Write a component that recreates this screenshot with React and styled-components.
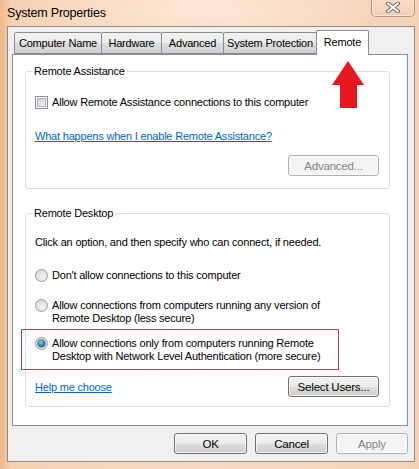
import styled, { createGlobalStyle } from "styled-components";

const GlobalStyle = createGlobalStyle`
  html, body {
    margin: 0;
    padding: 0;
  }
  body {
    font-family: "Liberation Sans", Arial, sans-serif;
    font-size: 11px;
    letter-spacing: -0.2px;
    color: #000;
  }
`;

const Window = styled.div`
  position: relative;
  width: 419px;
  height: 469px;
  display: flex;
  flex-direction: column;
  overflow: hidden;
  background:
    radial-gradient(ellipse 180px 40px at 200px 10px, rgba(255, 236, 220, 0.8), transparent),
    linear-gradient(90deg, #f0b88c 0px, #f6d2b3 12px, #f7d9bf 50%, #f6d3b5 100%);
`;

const TitleBar = styled.div`
  height: 27px;
  display: flex;
  align-items: flex-start;
  justify-content: space-between;
  padding: 0 4px 0 7px;
`;

const Title = styled.div`
  margin-top: 6px;
  font-size: 12.5px;
  color: #000;
`;

const CloseBtn = styled.div`
  width: 42px;
  height: 17px;
  margin-top: -1px;
  border: 1px solid rgba(120, 90, 70, 0.5);
  border-top: none;
  border-radius: 0 0 5px 5px;
  background: linear-gradient(#f9dcc4, #f4d0b2);
  box-shadow: inset 0 0 0 1px rgba(255, 255, 255, 0.5);
  display: flex;
  align-items: center;
  justify-content: center;
`;

const Client = styled.div`
  flex: 1;
  margin: 0 4px 7px 7px;
  background: #f0f0f0;
  border: 1px solid #8d8d8d;
  display: flex;
  flex-direction: column;
  padding: 3px 6px 7px 4px;
`;

const TabRow = styled.div`
  display: flex;
  align-items: flex-end;
  height: 24px;
  padding-left: 2px;
  position: relative;
  z-index: 1;
`;

const Tab = styled.div`
  width: ${(p) => p.$w}px;
  height: ${(p) => (p.$active ? 25 : 22)}px;
  margin-left: -1px;
  margin-bottom: ${(p) => (p.$active ? -1 : 0)}px;
  box-sizing: border-box;
  border: 1px solid #898c95;
  border-bottom: ${(p) => (p.$active ? "none" : "1px solid #898c95")};
  border-radius: 2px 2px 0 0;
  background: ${(p) =>
    p.$active
      ? "#fff"
      : "linear-gradient(#f2f2f2 0%, #ebebeb 50%, #dddddd 51%, #cfcfcf 100%)"};
  display: flex;
  align-items: ${(p) => (p.$active ? "flex-start" : "center")};
  justify-content: center;
  padding-top: ${(p) => (p.$active ? 5 : 0)}px;
  white-space: nowrap;
  &:first-child {
    margin-left: 0;
  }
`;

const Panel = styled.div`
  height: 372px;
  box-sizing: border-box;
  background: #fff;
  border: 1px solid #898c95;
  padding: 9px 17px 0 12px;
`;

const Group = styled.fieldset`
  margin: ${(p) => p.$top}px 0 0 0;
  padding: 0 10px ${(p) => p.$bottom}px 9px;
  border: 1px solid #d5dfe5;
  border-radius: 3px;
  min-width: 0;
`;

const Legend = styled.legend`
  padding: 0 2px;
  margin-left: -3px;
  line-height: 14px;
`;

const Line = styled.div`
  margin-top: ${(p) => p.$top}px;
  line-height: 14px;
  display: flex;
  align-items: ${(p) => (p.$center ? "center" : "flex-start")};
  justify-content: ${(p) => p.$justify || "flex-start"};
`;

const Label = styled.div`
  margin-left: 4px;
  line-height: 13px;
`;

const Check = styled.span`
  width: 13px;
  height: 13px;
  box-sizing: border-box;
  border: 1px solid #8e8f8f;
  background: #fff;
  display: flex;
  align-items: center;
  justify-content: center;
  flex-shrink: 0;
  &::after {
    content: "";
    width: 9px;
    height: 9px;
    background: linear-gradient(135deg, #cbcfd5, #f6f6f6);
    border: 1px solid #aeb3b9;
    box-sizing: border-box;
  }
`;

const Radio = styled.span`
  width: 13px;
  height: 13px;
  box-sizing: border-box;
  border-radius: 50%;
  border: 1px solid #9a9a9a;
  background: radial-gradient(circle at 60% 65%, #f4f4f4, #d2d2d2);
  display: flex;
  align-items: center;
  justify-content: center;
  flex-shrink: 0;
  &::after {
    content: "";
    display: ${(p) => (p.$on ? "block" : "none")};
    width: 7px;
    height: 7px;
    border-radius: 50%;
    background: radial-gradient(circle at 40% 35%, #8fd3f5, #1f6d9e 60%, #174f74);
    box-shadow: 0 0 0 0.5px #1d4a6a;
  }
`;

const Link = styled.a`
  color: #0066cc;
  text-decoration: underline;
  cursor: pointer;
`;

const Highlight = styled.div`
  width: 318px;
  box-sizing: border-box;
  margin: 4px 0 0 -14px;
  padding: 7px 0 6px 13px;
  border: 1px solid #c0404a;
  display: flex;
  align-items: flex-start;
`;

const Button = styled.button`
  width: ${(p) => p.$w || 91}px;
  height: 21px;
  box-sizing: border-box;
  font-family: inherit;
  font-size: 11.5px;
  letter-spacing: -0.2px;
  border-radius: 3px;
  border: 1px solid ${(p) => (p.disabled ? "#adb2b5" : "#707070")};
  color: ${(p) => (p.disabled ? "#838383" : "#000")};
  background: ${(p) =>
    p.disabled
      ? "#f4f4f4"
      : "linear-gradient(#f2f2f2 0%, #ebebeb 50%, #dddddd 51%, #cfcfcf 100%)"};
  box-shadow: inset 0 0 0 1px rgba(255, 255, 255, 0.7);
  padding: 0;
`;

const Footer = styled.div`
  margin-top: 7px;
  display: flex;
  justify-content: flex-end;
  gap: 8px;
`;

const Arrow = styled.svg`
  position: absolute;
  left: 331px;
  top: 60px;
`;

export default function App() {
  return (
    <>
      <GlobalStyle />
      <Window>
        <TitleBar>
          <Title>System Properties</Title>
          <CloseBtn>
            <svg width="14" height="11" viewBox="0 0 14 11">
              <path d="M2 1.5 L12 9.5 M12 1.5 L2 9.5" stroke="#6d6d6d" strokeWidth="4" strokeLinecap="round" />
              <path d="M2 1.5 L12 9.5 M12 1.5 L2 9.5" stroke="#fff" strokeWidth="2" strokeLinecap="round" />
            </svg>
          </CloseBtn>
        </TitleBar>
        <Client>
          <TabRow>
            <Tab $w={88}>Computer Name</Tab>
            <Tab $w={61}>Hardware</Tab>
            <Tab $w={63}>Advanced</Tab>
            <Tab $w={94}>System Protection</Tab>
            <Tab $w={53} $active>Remote</Tab>
          </TabRow>
          <Panel>
            <Group $top={0} $bottom={12}>
              <Legend>Remote Assistance</Legend>
              <Line $top={18} $center>
                <Check />
                <Label>Allow Remote Assistance connections to this computer</Label>
              </Line>
              <Line $top={20}>
                <Link>What happens when I enable Remote Assistance?</Link>
              </Line>
              <Line $top={12} $justify="flex-end">
                <Button disabled>Advanced...</Button>
              </Line>
            </Group>
            <Group $top={17} $bottom={9}>
              <Legend>Remote Desktop</Legend>
              <Line $top={15}>Click an option, and then specify who can connect, if needed.</Line>
              <Line $top={20} $center>
                <Radio />
                <Label>Don't allow connections to this computer</Label>
              </Line>
              <Line $top={17}>
                <Radio />
                <Label>
                  Allow connections from computers running any version of
                  <br />
                  Remote Desktop (less secure)
                </Label>
              </Line>
              <Highlight>
                <Radio $on />
                <Label>
                  Allow connections only from computers running Remote
                  <br />
                  Desktop with Network Level Authentication (more secure)
                </Label>
              </Highlight>
              <Line $top={6} $center $justify="space-between">
                <Link>Help me choose</Link>
                <Button>Select Users...</Button>
              </Line>
            </Group>
          </Panel>
          <Footer>
            <Button $w={73}>OK</Button>
            <Button $w={73}>Cancel</Button>
            <Button $w={72} disabled>Apply</Button>
          </Footer>
        </Client>
        <Arrow width="34" height="50" viewBox="0 0 34 50">
          <polygon points="17,1 33,25 26,25 26,48 9,48 9,25 1,25" fill="#e8161e" />
        </Arrow>
      </Window>
    </>
  );
}
